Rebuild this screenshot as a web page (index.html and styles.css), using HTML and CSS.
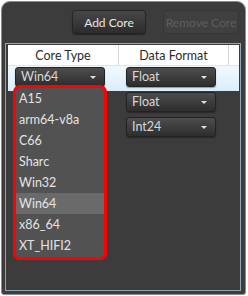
FILE: index.html
```html
<!DOCTYPE html>
<html lang="en">
<head>
    <meta charset="UTF-8">
    <title>Cores</title>
    <link rel="stylesheet" href="styles.css">
</head>
<body>
    <div class="window">
        <div class="toolbar">
            <button class="btn">Add Core</button>
            <button class="btn" disabled>Remove Core</button>
        </div>
        <div class="grid">
            <div class="row head">
                <div class="cell">Core Type</div>
                <div class="cell">Data Format</div>
                <div class="cell"></div>
            </div>
            <div class="row selected">
                <div class="cell">
                    <div class="combo"><span>Win64</span><i class="arrow"></i></div>
                    <ul class="popup">
                        <li>A15</li>
                        <li>arm64-v8a</li>
                        <li>C66</li>
                        <li>Sharc</li>
                        <li>Win32</li>
                        <li class="hover">Win64</li>
                        <li>x86_64</li>
                        <li>XT_HIFI2</li>
                    </ul>
                </div>
                <div class="cell">
                    <div class="combo"><span>Float</span><i class="arrow"></i></div>
                </div>
                <div class="cell"></div>
            </div>
            <div class="row">
                <div class="cell"></div>
                <div class="cell">
                    <div class="combo"><span>Float</span><i class="arrow"></i></div>
                </div>
                <div class="cell"></div>
            </div>
            <div class="row">
                <div class="cell"></div>
                <div class="cell">
                    <div class="combo"><span>Int24</span><i class="arrow"></i></div>
                </div>
                <div class="cell"></div>
            </div>
        </div>
    </div>
</body>
</html>
```

FILE: styles.css
```css
body { margin: 0; background: #fff; font-family: Lato, "Noto Sans", Arial, sans-serif; font-size: 12px; }
.window { box-sizing: border-box; width: 245px; height: 294px; margin: 1px 0 0 1px; border: 1px solid #8c8c8c; border-radius: 9px 9px 3px 3px; background: #3c3c3c; display: flex; flex-direction: column; padding: 8px 6px 3px 3px; }
.toolbar { display: flex; justify-content: flex-end; gap: 17px; height: 24px; }
.btn { box-sizing: border-box; height: 24px; padding: 0; border: 1px solid #252525; border-radius: 4px; background: linear-gradient(#474747, #2c2c2c); color: #e6e6e6; font: inherit; font-size: 12px; width: 74px; white-space: nowrap; box-shadow: 0 1px 1px rgba(0, 0, 0, 0.4); }
.btn:disabled { width: 76px; background: #404040; border-color: #353535; color: #5e5e5e; box-shadow: none; }
.grid { flex: 1; margin: 9px -2px 0 0; border: 1px solid #8ea7b6; padding: 1px 1px 0 2px; }
.row { display: grid; grid-template-columns: 111px 110px 1fr; height: 25px; }
.row.head { height: 21px; background: #fff; border-bottom: 1px solid #dde4ea; box-sizing: border-box; color: #2b2b2b; font-size: 12.5px; }
.head .cell { display: flex; align-items: center; justify-content: center; border-right: 1px solid #d3dbe1; }
.head .cell:last-child { border-right: none; }
.row.selected { background: linear-gradient(#f2f9fe, #d9edfa); }
.cell { position: relative; }
.combo { box-sizing: border-box; position: relative; margin: 1px 0 0 7px; width: 90px; height: 20px; border: 1px solid #232323; border-radius: 3px; background: linear-gradient(#4d4d4d, #2d2d2d); color: #d8d8d8; padding-left: 5px; line-height: 18px; font-size: 12.5px; box-shadow: 0 1px 1px rgba(0, 0, 0, 0.35); }
.arrow { position: absolute; right: 8px; top: 8px; border-left: 3px solid transparent; border-right: 3px solid transparent; border-top: 3px solid #e0e0e0; }
.popup { position: absolute; left: 5px; top: 19px; margin: 0; padding: 0; list-style: none; box-sizing: border-box; width: 94px; height: 175px; border: 3px solid #ff0000; border-radius: 7px; background: #525252; color: #e4e4e4; font-size: 12.5px; z-index: 2; }
.popup li { height: 21px; line-height: 21px; padding-left: 3px; }
.popup li.hover { background: #6a6a6a; }
```
